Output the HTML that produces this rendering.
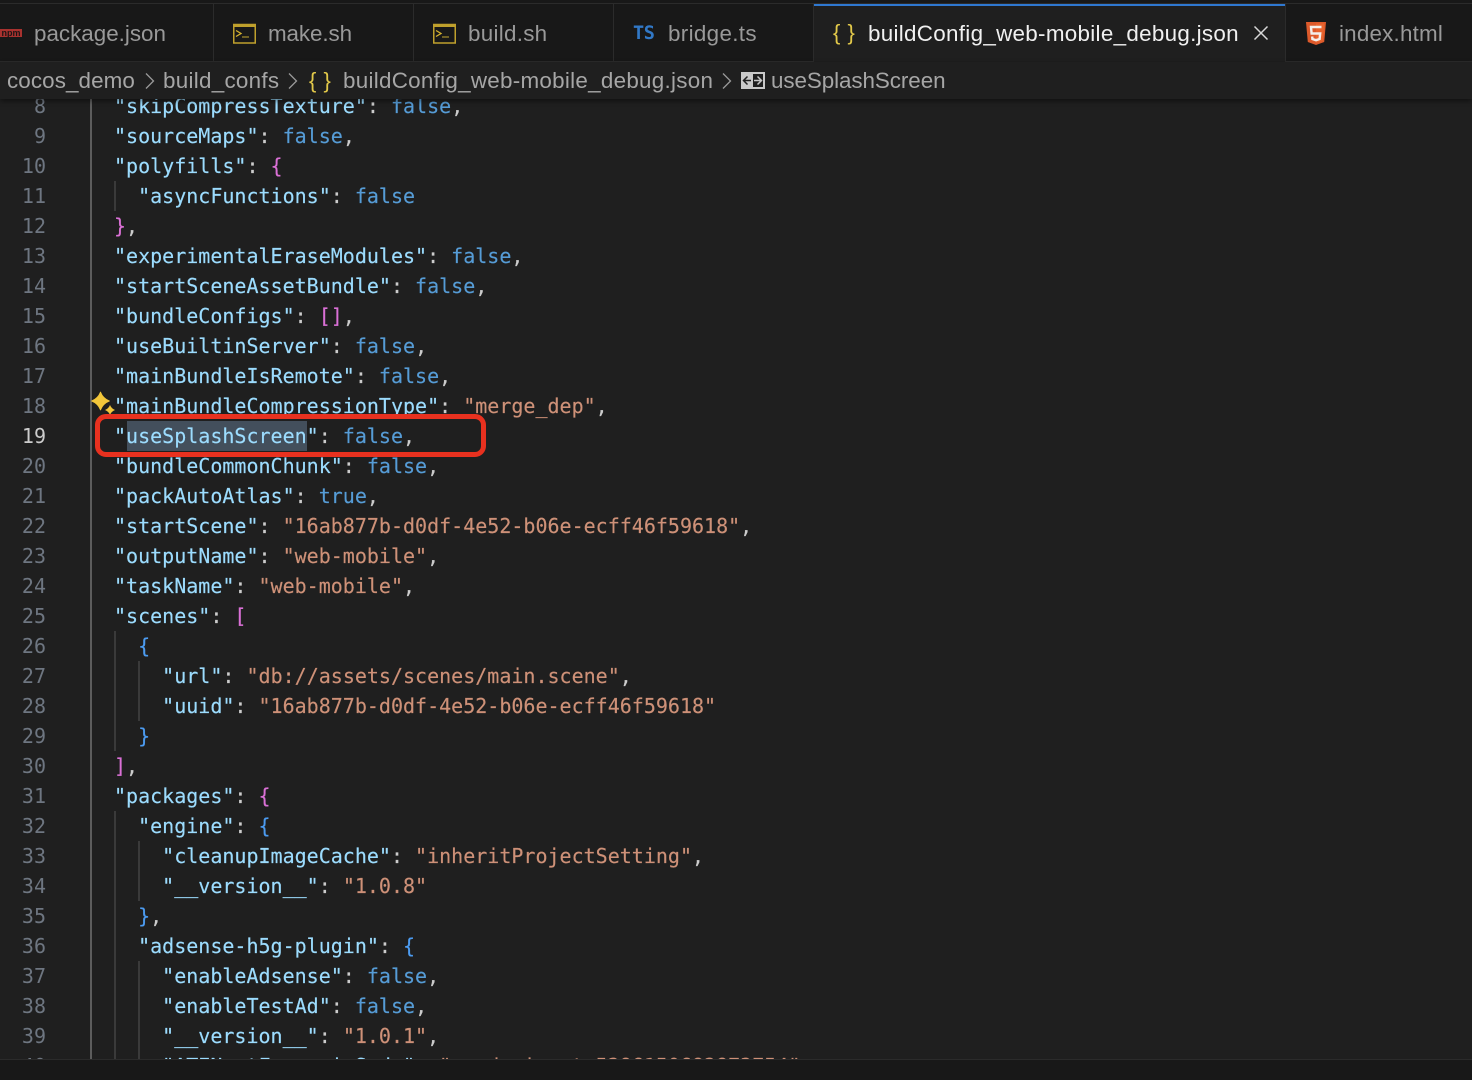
<!DOCTYPE html>
<html><head><meta charset="utf-8"><title>buildConfig_web-mobile_debug.json</title>
<style>
html,body{margin:0;padding:0;background:#1f1f1f;}
#r{position:relative;width:1472px;height:1080px;overflow:hidden;background:#1f1f1f;font-family:"Liberation Sans",sans-serif;}
.a{position:absolute;}
.t{position:absolute;top:18px;font-size:22.4px;line-height:32px;color:#999;white-space:nowrap;}
.b{position:absolute;top:65px;font-size:22.4px;line-height:32px;color:#a6a6a6;white-space:nowrap;}
.sep{position:absolute;width:1px;top:4px;height:57px;background:#2b2b2b;}
#code{position:absolute;left:0;top:91px;width:1472px;height:968px;overflow:hidden;}
.l{position:absolute;left:114px;height:30px;font:20px/30px "DejaVu Sans Mono","Liberation Mono",monospace;white-space:pre;color:#cccccc;-webkit-text-stroke:.15px;}
.n{position:absolute;left:0;width:46px;text-align:right;font:20px/30px "DejaVu Sans Mono","Liberation Mono",monospace;color:#6e7681;}
i{font-style:normal;}
.k{color:#9cdcfe;}.f{color:#569cd6;}.s{color:#ce9178;}.p{color:#da70d6;}.u{color:#4c9bf0;}.c{color:#cccccc;}
.g{position:absolute;width:2px;background:#3a3a3a;}
</style></head><body><div id="r">

<div id="code">
<div class="a" style="left:90px;top:0;width:2px;height:968px;background:#5c5c5c"></div>
<div class="g" style="left:114px;top:90px;height:30px"></div>
<div class="g" style="left:114px;top:540px;height:120px"></div>
<div class="g" style="left:138px;top:570px;height:60px"></div>
<div class="g" style="left:114px;top:720px;height:248px"></div>
<div class="g" style="left:138px;top:750px;height:60px"></div>
<div class="g" style="left:138px;top:870px;height:98px"></div>
<div class="a" style="left:127px;top:330px;width:180px;height:30px;background:#434f5c"></div>

<div class="n" style="top:0">8</div><div class="l" style="top:0"><i class="k">"skipCompressTexture"</i>: <i class="f">false</i>,</div>
<div class="n" style="top:30px">9</div><div class="l" style="top:30px"><i class="k">"sourceMaps"</i>: <i class="f">false</i>,</div>
<div class="n" style="top:60px">10</div><div class="l" style="top:60px"><i class="k">"polyfills"</i>: <i class="p">{</i></div>
<div class="n" style="top:90px">11</div><div class="l" style="top:90px">  <i class="k">"asyncFunctions"</i>: <i class="f">false</i></div>
<div class="n" style="top:120px">12</div><div class="l" style="top:120px"><i class="p">}</i>,</div>
<div class="n" style="top:150px">13</div><div class="l" style="top:150px"><i class="k">"experimentalEraseModules"</i>: <i class="f">false</i>,</div>
<div class="n" style="top:180px">14</div><div class="l" style="top:180px"><i class="k">"startSceneAssetBundle"</i>: <i class="f">false</i>,</div>
<div class="n" style="top:210px">15</div><div class="l" style="top:210px"><i class="k">"bundleConfigs"</i>: <i class="p">[]</i>,</div>
<div class="n" style="top:240px">16</div><div class="l" style="top:240px"><i class="k">"useBuiltinServer"</i>: <i class="f">false</i>,</div>
<div class="n" style="top:270px">17</div><div class="l" style="top:270px"><i class="k">"mainBundleIsRemote"</i>: <i class="f">false</i>,</div>
<div class="n" style="top:300px">18</div><div class="l" style="top:300px"><i class="k">"mainBundleCompressionType"</i>: <i class="s">"merge_dep"</i>,</div>
<div class="n" style="top:330px;color:#cccccc">19</div><div class="l" style="top:330px"><i class="k">"useSplashScreen"</i>: <i class="f">false</i>,</div>
<div class="n" style="top:360px">20</div><div class="l" style="top:360px"><i class="k">"bundleCommonChunk"</i>: <i class="f">false</i>,</div>
<div class="n" style="top:390px">21</div><div class="l" style="top:390px"><i class="k">"packAutoAtlas"</i>: <i class="f">true</i>,</div>
<div class="n" style="top:420px">22</div><div class="l" style="top:420px"><i class="k">"startScene"</i>: <i class="s">"16ab877b-d0df-4e52-b06e-ecff46f59618"</i>,</div>
<div class="n" style="top:450px">23</div><div class="l" style="top:450px"><i class="k">"outputName"</i>: <i class="s">"web-mobile"</i>,</div>
<div class="n" style="top:480px">24</div><div class="l" style="top:480px"><i class="k">"taskName"</i>: <i class="s">"web-mobile"</i>,</div>
<div class="n" style="top:510px">25</div><div class="l" style="top:510px"><i class="k">"scenes"</i>: <i class="p">[</i></div>
<div class="n" style="top:540px">26</div><div class="l" style="top:540px">  <i class="u">{</i></div>
<div class="n" style="top:570px">27</div><div class="l" style="top:570px">    <i class="k">"url"</i>: <i class="s">"db://assets/scenes/main.scene"</i>,</div>
<div class="n" style="top:600px">28</div><div class="l" style="top:600px">    <i class="k">"uuid"</i>: <i class="s">"16ab877b-d0df-4e52-b06e-ecff46f59618"</i></div>
<div class="n" style="top:630px">29</div><div class="l" style="top:630px">  <i class="u">}</i></div>
<div class="n" style="top:660px">30</div><div class="l" style="top:660px"><i class="p">]</i>,</div>
<div class="n" style="top:690px">31</div><div class="l" style="top:690px"><i class="k">"packages"</i>: <i class="p">{</i></div>
<div class="n" style="top:720px">32</div><div class="l" style="top:720px">  <i class="k">"engine"</i>: <i class="u">{</i></div>
<div class="n" style="top:750px">33</div><div class="l" style="top:750px">    <i class="k">"cleanupImageCache"</i>: <i class="s">"inheritProjectSetting"</i>,</div>
<div class="n" style="top:780px">34</div><div class="l" style="top:780px">    <i class="k">"__version__"</i>: <i class="s">"1.0.8"</i></div>
<div class="n" style="top:810px">35</div><div class="l" style="top:810px">  <i class="u">}</i>,</div>
<div class="n" style="top:840px">36</div><div class="l" style="top:840px">  <i class="k">"adsense-h5g-plugin"</i>: <i class="u">{</i></div>
<div class="n" style="top:870px">37</div><div class="l" style="top:870px">    <i class="k">"enableAdsense"</i>: <i class="f">false</i>,</div>
<div class="n" style="top:900px">38</div><div class="l" style="top:900px">    <i class="k">"enableTestAd"</i>: <i class="f">false</i>,</div>
<div class="n" style="top:930px">39</div><div class="l" style="top:930px">    <i class="k">"__version__"</i>: <i class="s">"1.0.1"</i>,</div>
<div class="n" style="top:960px">40</div><div class="l" style="top:960px">    <i class="k">"ATENsetFormacinSeda"</i>: <i class="s">"ca-devin-ctx5386150682873754"</i></div>
</div>

<!-- sparkle -->
<svg class="a" style="left:88px;top:390px" width="30" height="28" viewBox="0 0 30 28"><path fill="#f2c63a" d="M12.500 2Q15 8.500 21.500 11Q15 13.500 12.500 20Q10 13.500 3.500 11Q10 8.500 12.500 2Z" stroke="#f2c63a" stroke-width=".8" stroke-linejoin="round"/><path fill="#f2c63a" d="M22 15Q23.400 18.600 27 20Q23.400 21.400 22 25Q20.600 21.400 17 20Q20.600 18.600 22 15Z"/></svg>

<!-- red box -->
<div class="a" style="left:95px;top:414px;width:381px;height:33px;border:5px solid #e8311f;border-radius:11px"></div>

<!-- tab bar -->
<div class="a" style="left:0;top:0;width:1472px;height:61px;background:#181818"></div>
<div class="a" style="left:0;top:3px;width:1472px;height:1px;background:#2b2b2b"></div>
<div class="a" style="left:0;top:61px;width:1472px;height:1px;background:#2b2b2b"></div>
<div class="sep" style="left:213px"></div><div class="sep" style="left:413px"></div><div class="sep" style="left:613px"></div><div class="sep" style="left:813px"></div><div class="sep" style="left:1285px"></div>
<div class="a" style="left:814px;top:4px;width:471px;height:58px;background:#1f1f1f"></div>
<div class="a" style="left:814px;top:4px;width:471px;height:2px;background:#2f78d0"></div>

<svg class="a" style="left:0;top:28px" width="24" height="10" viewBox="0 0 24 10"><rect x="-4" y="1" width="26" height="8" fill="#a8322f"/><text x="11" y="8" text-anchor="middle" font-family="Liberation Sans" font-weight="bold" font-size="9" fill="#1b1515" textLength="19">npm</text></svg>
<div class="t" style="left:34px">package.json</div>

<svg class="a" style="left:233px;top:23px" width="24" height="22" viewBox="0 0 24 22"><rect x=".75" y="1.500" width="21.500" height="18.500" fill="none" stroke="#bfa02c" stroke-width="1.500"/><rect x="0" y="1" width="23" height="3" fill="#bfa02c"/><path d="M3 7.500L8 10.500L3 13.500" fill="none" stroke="#d6b32f" stroke-width="1.300"/><path d="M9 14H16" stroke="#a8902c" stroke-width="1.200"/></svg>
<div class="t" style="left:268px;letter-spacing:-.1px">make.sh</div>

<svg class="a" style="left:433px;top:23px" width="24" height="22" viewBox="0 0 24 22"><rect x=".75" y="1.500" width="21.500" height="18.500" fill="none" stroke="#bfa02c" stroke-width="1.500"/><rect x="0" y="1" width="23" height="3" fill="#bfa02c"/><path d="M3 7.500L8 10.500L3 13.500" fill="none" stroke="#d6b32f" stroke-width="1.300"/><path d="M9 14H16" stroke="#a8902c" stroke-width="1.200"/></svg>
<div class="t" style="left:468px;letter-spacing:.28px">build.sh</div>

<div class="a" style="left:633px;top:18px;font:bold 18.500px/32px 'DejaVu Sans Mono',monospace;color:#3178c6;letter-spacing:-.4px">TS</div>
<div class="t" style="left:668px;letter-spacing:.33px">bridge.ts</div>

<div class="a" style="left:833px;top:17px;font:22px/32px 'Liberation Sans',sans-serif;color:#e2c94a;letter-spacing:.5px">{ }</div>
<div class="t" style="left:868px;color:#f0f0f0;letter-spacing:.3px">buildConfig_web-mobile_debug.json</div>
<svg class="a" style="left:1252px;top:24px" width="18" height="18" viewBox="0 0 18 18"><path d="M2.500 2.500L15.500 15.500M15.500 2.500L2.500 15.500" stroke="#d8d8d8" stroke-width="1.500" fill="none"/></svg>

<svg class="a" style="left:1305px;top:21px" width="22" height="25" viewBox="0 0 22 25"><path d="M1 1H21L19.200 21L11 24L2.800 21Z" fill="#dd5a2b"/><path d="M11 2.500H19.300L17.800 19.800L11 22Z" fill="#e8642e"/><path d="M16.500 6H6L6.600 12.500H15.200L14.600 18L11 19.200L7.400 18L7.200 15.500" fill="none" stroke="#f4f0ec" stroke-width="2.400"/></svg>
<div class="t" style="left:1339px;letter-spacing:.2px">index.html</div>

<!-- breadcrumb -->
<div class="a" style="left:0;top:62px;width:1472px;height:37px;background:#1f1f1f;box-shadow:0 2px 5px rgba(0,0,0,.45)"></div>
<div class="b" style="left:7px;letter-spacing:.1px">cocos_demo</div>
<svg class="a" style="left:144px;top:72px" width="12" height="18" viewBox="0 0 12 18"><path d="M2 1.500L9.500 9L2 16.500" fill="none" stroke="#9a9a9a" stroke-width="1.300"/></svg>
<div class="b" style="left:163px;letter-spacing:.28px">build_confs</div>
<svg class="a" style="left:287px;top:72px" width="12" height="18" viewBox="0 0 12 18"><path d="M2 1.500L9.500 9L2 16.500" fill="none" stroke="#9a9a9a" stroke-width="1.300"/></svg>
<div class="a" style="left:309px;top:65px;font:22px/32px 'Liberation Sans',sans-serif;color:#e2c94a;letter-spacing:.5px">{ }</div>
<div class="b" style="left:343px;letter-spacing:.28px">buildConfig_web-mobile_debug.json</div>
<svg class="a" style="left:721px;top:72px" width="12" height="18" viewBox="0 0 12 18"><path d="M2 1.500L9.500 9L2 16.500" fill="none" stroke="#9a9a9a" stroke-width="1.300"/></svg>
<svg class="a" style="left:741px;top:72px" width="24" height="17" viewBox="0 0 24 17"><rect x="0" y="0" width="24" height="17" fill="#c9c9c9"/><rect x="12" y="2" width="10" height="13" fill="#1f1f1f"/><path d="M10 8.500H3M6.500 4.500L2.500 8.500L6.500 12.500" fill="none" stroke="#1f1f1f" stroke-width="1.500"/><path d="M13 8.500H20M16.500 4.500L20.500 8.500L16.500 12.500" fill="none" stroke="#c9c9c9" stroke-width="1.500"/></svg>
<div class="b" style="left:771px;letter-spacing:-.07px">useSplashScreen</div>

<!-- bottom bar -->
<div class="a" style="left:0;top:1059px;width:1472px;height:21px;background:#181818;border-top:1px solid #2b2b2b;box-sizing:border-box"></div>
</div></body></html>
